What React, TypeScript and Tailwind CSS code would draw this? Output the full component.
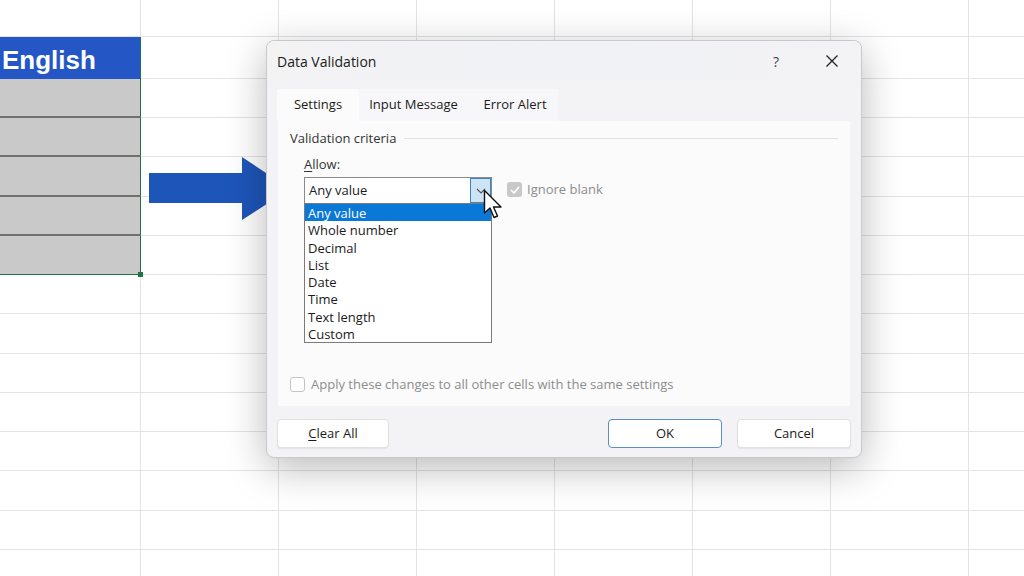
import React from "react";

const COLS = [141, 138, 138, 138, 138, 138, 138, 138];
const ROWS = [37, 42, 39, 39, 40, 39, 39, 39.3, 39.3, 39.3, 39.3, 39.3, 39.3, 39.3, 39.3];

const ui = { fontFamily: '"Open Sans", "Noto Sans", sans-serif' };

function Sheet() {
  return (
    <div
      className="grid"
      style={{
        gridTemplateColumns: COLS.map((c) => c + "px").join(" "),
        gridTemplateRows: ROWS.map((r) => r + "px").join(" "),
      }}
    >
      {ROWS.map((_, r) =>
        COLS.map((_, c) => {
          const key = r + "-" + c;
          if (c === 0 && r === 1) {
            return (
              <div
                key={key}
                className="bg-[#2457c5] text-white font-bold text-[26px] leading-none flex items-center pl-[2px] pt-[3px] border-r border-[#217346]"
                style={{ fontFamily: '"Liberation Sans", Arial, sans-serif' }}
              >
                English
              </div>
            );
          }
          if (c === 0 && r >= 2 && r <= 6) {
            return (
              <div
                key={key}
                className={`relative bg-[#c9c9c9] border-r border-[#217346] ${r < 6 ? "border-b-2 border-b-[#707070]" : "border-b border-b-[#217346]"}`}
              >
                {r === 6 && <div className="absolute -right-[3px] -bottom-[3px] w-[5px] h-[5px] bg-[#217346]" />}
              </div>
            );
          }
          return <div key={key} className="border-r border-b border-[#e3e3e3]" />;
        })
      )}
    </div>
  );
}

function Arrow() {
  return (
    <svg className="absolute left-[149px] top-[157px]" width="144" height="64" viewBox="0 0 144 64">
      <polygon points="0,16 93,16 93,0 141,32 93,63 93,46 0,46" fill="#1e55b9" />
    </svg>
  );
}

function Cursor() {
  return (
    <svg className="absolute left-[483px] top-[189px]" width="22" height="32" viewBox="0 0 22 32">
      <path d="M1.5 1.5 L1.5 24 L7 19 L11 28.5 L14.5 27 L10.5 18 L18 18 Z" fill="#fff" stroke="#111" strokeWidth="1.4" strokeLinejoin="round" />
    </svg>
  );
}

const options = ["Any value", "Whole number", "Decimal", "List", "Date", "Time", "Text length", "Custom"];

function Dialog() {
  return (
    <div
      className="absolute left-[266px] top-[40px] w-[596px] h-[418px] rounded-[8px] border border-[#c9c9cc] bg-[#f3f3f5] shadow-[0_10px_40px_rgba(0,0,0,0.28)] flex flex-col text-[#1b1b1b]"
      style={ui}
    >
      <div className="h-[40px] flex items-center pl-[10px] pr-[22px] text-[14px] rounded-t-[8px] bg-gradient-to-r from-[#f3f3f4] via-[#f1f2f6] to-[#f3f3f5]">
        <span className="mt-[1px]">Data Validation</span>
        <span className="ml-auto text-[14px] text-[#444]">?</span>
        <svg className="ml-[46px]" width="14" height="14" viewBox="0 0 14 14">
          <path d="M1.5 1.5 L12.5 12.5 M12.5 1.5 L1.5 12.5" stroke="#222" strokeWidth="1.3" />
        </svg>
      </div>
      <div className="mt-[8px] ml-[10px] flex h-[32px] text-[13px] whitespace-nowrap">
        <div className="w-[82px] bg-[#fbfbfb] rounded-t-[3px] flex items-center justify-center">Settings</div>
        <div className="flex bg-[#f7f7f9]">
          <div className="w-[109px] flex items-center justify-center">Input Message</div>
          <div className="w-[90px] flex items-center justify-center pl-[4px]">Error Alert</div>
        </div>
      </div>
      <div className="mx-[11px] h-[285px] bg-[#fbfbfb] relative flex flex-col px-[12px] pt-[8px] text-[13px]">
        <div className="flex items-center gap-[8px]">
          <span className="text-[#333]">Validation criteria</span>
          <div className="flex-1 h-px bg-[#e2e2e2]" />
        </div>
        <div className="ml-[14px] mt-[6px] text-[#333]">
          <span className="underline underline-offset-2">A</span>llow:
        </div>
        <div className="ml-[14px] mt-[3px] flex items-start">
          <div className="relative w-[188px]">
            <div className="h-[27px] bg-white border border-[#8a8a8a] flex items-center">
              <span className="pl-[4px] flex-1">Any value</span>
              <div className="w-[21px] h-[25px] bg-[#cde4f7] border border-[#3d86c6] flex items-center justify-center">
                <svg width="10" height="6" viewBox="0 0 10 6">
                  <path d="M1 1 L5 5 L9 1" stroke="#555" strokeWidth="1.1" fill="none" />
                </svg>
              </div>
            </div>
            <div className="absolute left-0 top-[26px] w-[188px] bg-white border border-[#7a7a7a]">
              {options.map((o, i) => (
                <div
                  key={o}
                  className={`h-[17.3px] leading-[17px] pl-[3px] pt-[1px] ${i === 0 ? "bg-[#0a78d7] text-white" : "text-[#1b1b1b]"}`}
                >
                  {o}
                </div>
              ))}
            </div>
          </div>
          <div className="ml-[15px] mt-[3px] flex items-center gap-[5px] text-[#8d8d8d]">
            <div className="w-[15px] h-[15px] rounded-[3px] bg-[#c8c8c8] flex items-center justify-center">
              <svg width="10" height="8" viewBox="0 0 10 8">
                <path d="M1 4 L4 7 L9 1" stroke="#fff" strokeWidth="1.5" fill="none" />
              </svg>
            </div>
            <span>Ignore blank</span>
          </div>
        </div>
        <div className="absolute left-[12px] top-[254px] flex items-center gap-[6px] text-[#8d8d8d]">
          <div className="w-[15px] h-[15px] rounded-[3px] border border-[#c4c4c4] bg-white" />
          <span>Apply these changes to all other cells with the same settings</span>
        </div>
      </div>
      <div className="flex mt-[13px] px-[10px] text-[13px]">
        <button className="w-[112px] h-[29px] bg-white rounded-[4px] border border-[#e0e0e0] shadow-[0_1px_1px_rgba(0,0,0,0.06)]">
          <span className="underline underline-offset-2">C</span>lear All
        </button>
        <button className="ml-auto w-[114px] h-[29px] bg-white rounded-[4px] border border-[#5b8fc2]">OK</button>
        <button className="ml-[15px] w-[114px] h-[29px] bg-white rounded-[4px] border border-[#e0e0e0] shadow-[0_1px_1px_rgba(0,0,0,0.06)]">
          Cancel
        </button>
      </div>
    </div>
  );
}

export default function App() {
  return (
    <div className="relative w-[1024px] h-[576px] overflow-hidden bg-white">
      <Sheet />
      <Arrow />
      <Dialog />
      <Cursor />
    </div>
  );
}
